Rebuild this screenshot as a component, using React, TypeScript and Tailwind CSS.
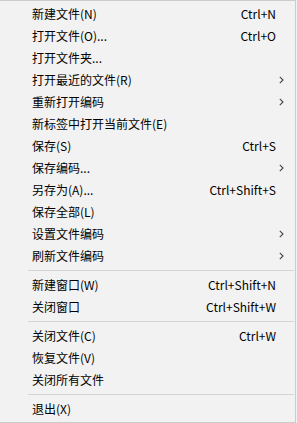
type Item = { label: string; shortcut?: string; sub?: boolean } | 'sep';

const items: Item[] = [
  { label: '新建文件(N)', shortcut: 'Ctrl+N' },
  { label: '打开文件(O)...', shortcut: 'Ctrl+O' },
  { label: '打开文件夹...' },
  { label: '打开最近的文件(R)', sub: true },
  { label: '重新打开编码', sub: true },
  { label: '新标签中打开当前文件(E)' },
  { label: '保存(S)', shortcut: 'Ctrl+S' },
  { label: '保存编码...', sub: true },
  { label: '另存为(A)...', shortcut: 'Ctrl+Shift+S' },
  { label: '保存全部(L)' },
  { label: '设置文件编码', sub: true },
  { label: '刷新文件编码', sub: true },
  'sep',
  { label: '新建窗口(W)', shortcut: 'Ctrl+Shift+N' },
  { label: '关闭窗口', shortcut: 'Ctrl+Shift+W' },
  'sep',
  { label: '关闭文件(C)', shortcut: 'Ctrl+W' },
  { label: '恢复文件(V)' },
  { label: '关闭所有文件' },
  'sep',
  { label: '退出(X)' },
];

function Chevron() {
  return (
    <svg width="5" height="8" viewBox="0 0 5 8" className="text-[#444]">
      <path d="M0.8 0.8 L4 4 L0.8 7.2" fill="none" stroke="currentColor" strokeWidth="1.1" />
    </svg>
  );
}

export default function App() {
  return (
    <div className="w-[297px] h-[423px] bg-[#f2f2f2]">
      <div
        className="w-[296px] h-[423px] bg-[#f2f2f2] border-t border-r border-b border-[#cccccc] pt-[2px] pb-[2px] text-[12px] text-black"
        style={{ fontFamily: '"Noto Sans CJK SC", sans-serif' }}
      >
        {items.map((it, i) =>
          it === 'sep' ? (
            <div key={i} className="h-[7px] flex items-center pl-[28px] pr-[1px]">
              <div className="h-px w-full bg-[#d5d5d5]" />
            </div>
          ) : (
            <div key={i} className="h-[22px] flex items-center pl-[32px] pr-[11px]">
              <span className="flex-1 leading-none">{it.label}</span>
              {it.shortcut && <span className="leading-none mr-[8px]">{it.shortcut}</span>}
              {it.sub && <Chevron />}
            </div>
          )
        )}
      </div>
    </div>
  );
}
